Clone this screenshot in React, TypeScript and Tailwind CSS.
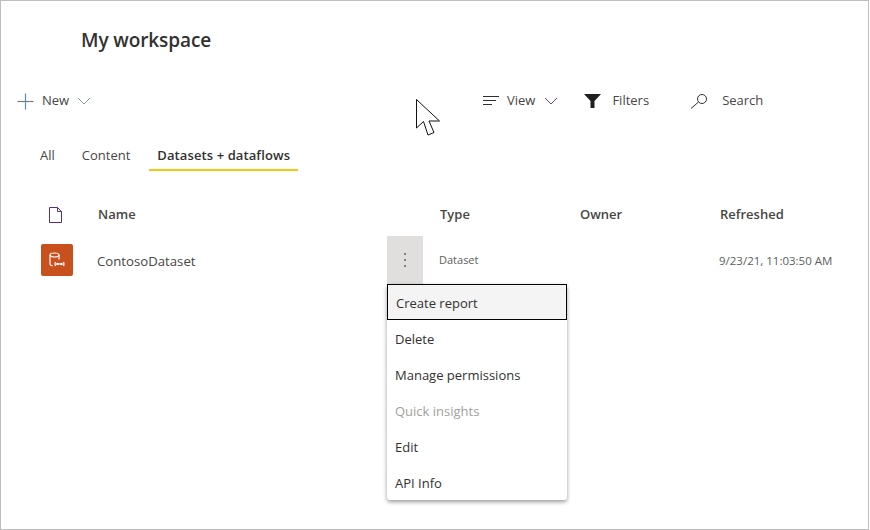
import React from "react";

const font = { fontFamily: '"Open Sans", "Noto Sans", sans-serif' };

function Chevron({ className }: { className?: string }) {
  return (
    <svg width="14" height="8" viewBox="0 0 14 8" fill="none" className={className}>
      <path d="M1 1l6 6 6-6" stroke="currentColor" strokeWidth="1" />
    </svg>
  );
}

const menu = ["Delete", "Manage permissions", "Quick insights", "Edit", "API Info"];

export default function App() {
  return (
    <div className="relative h-[530px] w-[870px] overflow-hidden bg-white">
      <div
        className="relative flex h-[530px] w-[869px] flex-col border border-[#bdbdbd] text-[#323130]"
        style={font}
      >
        <h1 className="mt-[25px] ml-[80px] h-[28px] text-[19px] leading-[28px] font-semibold tracking-[-0.1px] text-[#323130]">
          My workspace
        </h1>

        <div className="mt-[33px] flex h-[28px] items-center text-[13px] text-[#484644]">
          <div className="ml-[16px] flex w-[460px] items-center">
            <svg width="17" height="17" viewBox="0 0 17 17" fill="none">
              <path d="M0.5 8.5h16" stroke="#7a7a7a" strokeWidth="1.2" />
              <path d="M8.5 0.5v16" stroke="#5b8fbf" strokeWidth="1.2" />
            </svg>
            <span className="ml-[8px]">New</span>
            <Chevron className="ml-[8px] text-[#8a97a6]" />
          </div>
          <div className="ml-[6px] flex items-center">
            <svg width="16" height="10" viewBox="0 0 16 10" fill="none">
              <path d="M0 0.5h16M0 4.500h13M0 8.500h9" stroke="#323130" strokeWidth="1" />
            </svg>
            <span className="ml-[8px]">View</span>
            <Chevron className="ml-[9px] text-[#7a4a6a]" />
          </div>
          <div className="ml-[26px] flex items-center">
            <svg width="17" height="14" viewBox="0 0 17 14">
              <path d="M0 0h17L10.500 7v7h-4V7z" fill="#1f1f1f" />
            </svg>
            <span className="ml-[11px]">Filters</span>
          </div>
          <div className="ml-[41px] flex items-center">
            <svg width="18" height="15" viewBox="0 0 18 15" fill="none">
              <circle cx="12" cy="5" r="4.500" stroke="#323130" strokeWidth="1" />
              <path d="M8.500 8L1 14.500" stroke="#323130" strokeWidth="1" />
            </svg>
            <span className="ml-[14px]">Search</span>
          </div>
        </div>

        <div className="mt-[30px] ml-[29px] flex h-[26px] text-[13px] leading-[20px] text-[#484644]">
          <span className="px-[10px]">All</span>
          <span className="ml-[7px] px-[10px]">Content</span>
          <span className="ml-[9px] border-b-2 border-[#f2c811] px-[8px] font-semibold tracking-[0.1px] text-[#323130]">
            Datasets + dataflows
          </span>
        </div>

        <div className="mt-[33px] flex h-[22px] items-center text-[13px] font-semibold text-[#484644]">
          <span className="ml-[48px] flex w-[49px]">
            <svg width="13" height="16" viewBox="0 0 13 16" fill="none">
              <path d="M0.500 0.500h8l4 4v11h-12z" stroke="#5c2d7a" strokeWidth="1" />
              <path d="M8.500 0.500v4h4" stroke="#5c2d7a" strokeWidth="1" />
            </svg>
          </span>
          <span className="w-[342px]">Name</span>
          <span className="w-[140px]">Type</span>
          <span className="w-[140px]">Owner</span>
          <span>Refreshed</span>
        </div>

        <div className="mt-[10px] flex h-[48px] items-center">
          <div className="ml-[40px] flex size-[32px] items-center justify-center rounded-[2px] bg-[#c8501d]">
            <svg width="16" height="16" viewBox="0 0 16 16" fill="none" stroke="white" strokeWidth="1.200">
              <ellipse cx="5.500" cy="3" rx="4.500" ry="2" />
              <path d="M1 3v9c0 .9.9 1.600 2.500 1.900M10 3v4.500" />
              <circle cx="8.500" cy="12" r=".7" fill="white" />
              <circle cx="12.500" cy="12" r=".7" fill="white" />
              <path d="M9 12h3" />
              <path d="M6.500 10c-.6 1.300-.6 2.700 0 4M14.500 10c.6 1.300.6 2.700 0 4" />
            </svg>
          </div>
          <span className="ml-[24px] w-[290px] pt-[3px] text-[13.200px] text-[#484644]">ContosoDataset</span>
          <div className="flex h-[48px] w-[36px] flex-col items-center justify-center gap-[4px] bg-[#e1dfdd]">
            <i className="size-[2px] rounded-full bg-[#605e5c]" />
            <i className="size-[2px] rounded-full bg-[#605e5c]" />
            <i className="size-[2px] rounded-full bg-[#605e5c]" />
          </div>
          <span className="ml-[16px] w-[280px] pt-[1px] text-[11px] text-[#605e5c]">Dataset</span>
          <span className="pt-[1px] text-[11.500px] whitespace-nowrap text-[#605e5c]">9/23/21, 11:03:50 AM</span>
        </div>

        <div className="absolute top-[283px] left-[386px] w-[180px] rounded-[3px] bg-white text-[13px] text-[#323130] shadow-[0_2px_4px_rgba(0,0,0,0.4)]">
          <div className="flex h-[36px] items-center border border-black bg-[#f4f4f4] pt-[3px] pl-[8px]">Create report</div>
          {menu.map((item) => (
            <div
              key={item}
              className={`flex h-[36px] items-center pt-[3px] pl-[8px] ${item === "Quick insights" ? "text-[#a19f9d]" : ""}`}
            >
              {item}
            </div>
          ))}
        </div>

        <svg width="28" height="40" viewBox="0 0 28 40" className="absolute top-[97px] left-[414px]">
          <path d="M1.500 1.500V30l7-6.500L13 37l6-2.500L14 23h10.500z" fill="white" stroke="#111" strokeWidth="1" />
        </svg>
      </div>
    </div>
  );
}
